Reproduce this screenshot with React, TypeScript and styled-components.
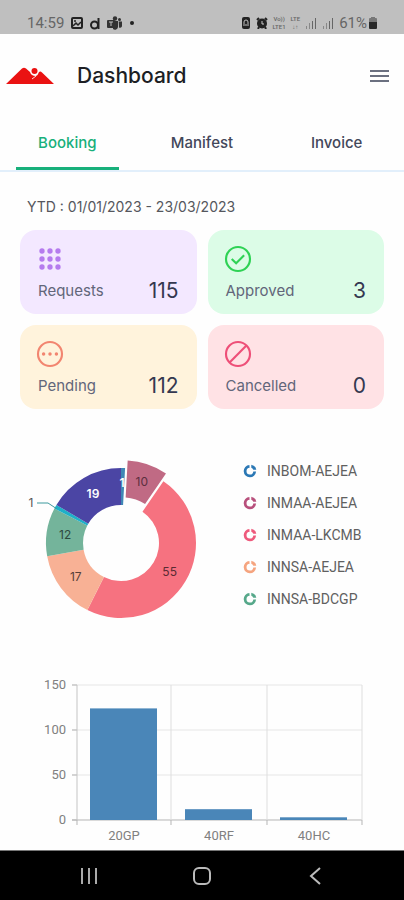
import React, { useState } from "react";
import styled, { createGlobalStyle } from "styled-components";

const GlobalStyle = createGlobalStyle`
  *, *::before, *::after { box-sizing: border-box; }
  body { margin: 0; background: #fefefe; font-family: Inter, "Liberation Sans", sans-serif; color: #1f2430; }
  button { font: inherit; border: 0; background: none; padding: 0; cursor: pointer; }
  svg { display: block; }
`;

const Screen = styled.div`
  display: flex;
  flex-direction: column;
  min-height: 100vh;
`;

const StatusBar = styled.div`
  display: flex;
  align-items: center;
  justify-content: space-between;
  height: 34px;
  padding: 12px 27px 0;
  background: #bfbfbf;
  color: #666;
  font: 15px Roboto, sans-serif;
`;

const StatusGroup = styled.div<{ $gap: number }>`
  display: flex;
  align-items: center;
  gap: ${(p) => p.$gap}px;
`;

const NetworkLabel = styled.span`
  display: grid;
  font-size: 6px;
  line-height: 8px;
  text-align: center;
  font-weight: 500;
`;

const Battery = styled.span`
  display: flex;
  align-items: center;
  gap: 2px;
`;

const Header = styled.header`
  display: flex;
  align-items: center;
  height: 84px;
  padding: 0 14px 0 5px;
`;

const Title = styled.h1`
  flex: 1;
  margin: 0 0 0 22px;
  font-size: 21px;
  line-height: 28px;
  font-weight: 500;
  color: #1d1f24;
`;

const Tabs = styled.nav`
  display: grid;
  grid-template-columns: repeat(3, 1fr);
  height: 54px;
  border-bottom: 2px solid #e2effb;
`;

const Tab = styled.button<{ $active: boolean }>`
  && {
    margin: 0 16px;
    border-bottom: 3px solid ${(p) => (p.$active ? "#18b07b" : "transparent")};
    color: ${(p) => (p.$active ? "#18b07b" : "#43475a")};
    font-size: 15px;
    font-weight: 500;
  }
`;

const Main = styled.main`
  padding: 24px 20px 0;
`;

const Period = styled.p`
  margin: 0 0 12px;
  padding-left: 7px;
  font-size: 14px;
  line-height: 22px;
  color: #55575d;
`;

const Cards = styled.div`
  display: grid;
  grid-template-columns: 1fr 1fr;
  gap: 11px;
`;

const Card = styled.section<{ $bg: string }>`
  height: 84px;
  padding: 13px 18px 0 14px;
  border-radius: 16px;
  background: ${(p) => p.$bg};
`;

const CardRow = styled.div`
  display: flex;
  align-items: center;
  justify-content: space-between;
  padding-left: 4px;
  line-height: 32px;
`;

const CardLabel = styled.span`
  font-size: 15px;
  color: #62667a;
`;

const CardValue = styled.span`
  font-size: 21px;
  color: #343850;
`;

const Breakdown = styled.section`
  display: flex;
  align-items: flex-start;
  justify-content: space-between;
  margin-top: 41px;
`;

const Legend = styled.ul`
  flex: 1;
  margin: 5px 0 0 43px;
  padding: 0;
  list-style: none;
`;

const LegendItem = styled.li`
  display: flex;
  align-items: center;
  gap: 10px;
  height: 32px;
  font: 14px Roboto, sans-serif;
  color: #606060;
`;

const BarSection = styled.section`
  margin-top: 52px;
`;

const BottomBar = styled.nav`
  display: grid;
  grid-template-columns: repeat(3, 1fr);
  align-items: center;
  height: 50px;
  margin-top: auto;
  padding: 0 32px;
  border-top: 1px solid #777;
  background: #000;
`;

const NavButton = styled.button`
  display: flex;
  justify-content: center;
`;

const SlotIcon = styled.svg`
  flex: none;
`;

const CX = 101;
const CY = 93;
const R_OUT = 75;
const R_IN = 38;
const TOTAL = 115;

type Slice = { value: number; color: string; label: string; shift?: number };

const slices: Slice[] = [
  { value: 1, color: "#3f87b5", label: "" },
  { value: 10, color: "#c06a84", label: "#5b2f3f", shift: 8 },
  { value: 55, color: "#f67280", label: "#5a2b33" },
  { value: 17, color: "#f8b195", label: "#574038" },
  { value: 12, color: "#74b49b", label: "#2d4a40" },
  { value: 1, color: "#1fb0c8", label: "" },
  { value: 19, color: "#4b45a4", label: "#ffffff" },
];

const point = (radius: number, angle: number) => [
  CX + radius * Math.sin(angle),
  CY - radius * Math.cos(angle),
];

function ringPath(start: number, end: number) {
  const large = end - start > Math.PI ? 1 : 0;
  const [a, b, c, d] = [point(R_OUT, start), point(R_OUT, end), point(R_IN, end), point(R_IN, start)];
  return `M${a} A${R_OUT} ${R_OUT} 0 ${large} 1 ${b} L${c} A${R_IN} ${R_IN} 0 ${large} 0 ${d}Z`;
}

function Donut() {
  let before = 0;
  return (
    <SlotIcon width="180" height="174" viewBox="0 0 180 174" role="img" aria-label="Bookings by route">
      {slices.map((slice, index) => {
        const start = (before / TOTAL) * Math.PI * 2;
        before += slice.value;
        const end = (before / TOTAL) * Math.PI * 2;
        const mid = (start + end) / 2;
        const shift = slice.shift ?? 0;
        const [x, y] = point((R_OUT + R_IN) / 2, mid);
        return (
          <g key={index} transform={`translate(${shift * Math.sin(mid)} ${-shift * Math.cos(mid)})`}>
            <path d={ringPath(start, end)} fill={slice.color} />
            {slice.label && (
              <text
                x={x}
                y={y + 4}
                fontSize="12"
                fontWeight={slice.value === 19 ? 600 : 400}
                textAnchor="middle"
                fill={slice.label}
              >
                {slice.value}
              </text>
            )}
          </g>
        );
      })}
      <text x="102" y="37" fontSize="12" fontWeight="600" textAnchor="middle" fill="#fff">1</text>
      <path d="M17 53h11l9 6" fill="none" stroke="#3d9a9e" strokeWidth="1" />
      <text x="11" y="57" fontSize="12" textAnchor="middle" fill="#555">1</text>
    </SlotIcon>
  );
}

const routes = [
  ["INBOM-AEJEA", "#2b78b5"],
  ["INMAA-AEJEA", "#b8507c"],
  ["INMAA-LKCMB", "#ee5a7c"],
  ["INNSA-AEJEA", "#f5a47f"],
  ["INNSA-BDCGP", "#56a88a"],
];

function RingMark({ color }: { color: string }) {
  return (
    <SlotIcon width="14" height="14" viewBox="0 0 14 14" fill="none" aria-hidden="true">
      <path d="M11.700 7.500A4.800 4.800 0 1 1 6.500 2.300" stroke={color} strokeWidth="2.800" />
      <path d="M8.300.7a6.400 6.400 0 0 1 5 5L10.300 5.800A3.500 3.500 0 0 0 8.300 3.800Z" fill={color} />
    </SlotIcon>
  );
}

const sizes = [
  { name: "20GP", value: 124 },
  { name: "40RF", value: 12 },
  { name: "40HC", value: 3 },
];

function BarChart() {
  const yOf = (v: number) => 144 - (v * 135) / 150;
  return (
    <svg width="100%" viewBox="0 0 364 168" fontFamily="Roboto, sans-serif" fontSize="13" fill="#808080" role="img" aria-label="Bookings by container size">
      {[0, 50, 100, 150].map((v) => (
        <g key={v}>
          <path d={`M52 ${yOf(v)}H342`} stroke={v ? "#e6e6e6" : "#b5b5b5"} />
          <path d={`M52 ${yOf(v)}h5`} stroke="#b5b5b5" />
          <text x="46" y={yOf(v) + 4} textAnchor="end">{v}</text>
        </g>
      ))}
      {[57, 151, 247, 342].map((x) => (
        <g key={x}>
          <path d={`M${x} 9V144`} stroke={x === 57 ? "#c4c4c4" : "#dedede"} />
          <path d={`M${x} 144v5`} stroke="#b5b5b5" />
        </g>
      ))}
      {sizes.map((size, i) => (
        <g key={size.name}>
          <rect x={70 + i * 95} y={yOf(size.value)} width="67" height={144 - yOf(size.value)} fill="#4a86b8" />
          <text x={104 + i * 95} y="164" textAnchor="middle">{size.name}</text>
        </g>
      ))}
    </svg>
  );
}

function Signal() {
  return (
    <svg width="12" height="12" viewBox="0 0 12 12" aria-hidden="true">
      <path d="M1 9h1v3H1zM4 6h1v6H4z" fill="#888" />
      <path d="M7 4h1v8H7zM10 1h1v11h-1z" fill="#666" />
    </svg>
  );
}

const stats = [
  {
    label: "Requests", value: 115, bg: "#f3e8ff", color: "#b57bee",
    icon: [6, 12, 18].flatMap((y) => [6, 12, 18].map((x) => <circle key={`${x}-${y}`} cx={x} cy={y} r="2" fill="currentColor" stroke="none" />)),
  },
  {
    label: "Approved", value: 3, bg: "#dcfce7", color: "#2fd255",
    icon: <><circle cx="12" cy="12" r="9" /><path d="m7.300 12 3.300 3.200 6-6" /></>,
  },
  {
    label: "Pending", value: 112, bg: "#fff3dc", color: "#f28570",
    icon: <><circle cx="12" cy="12" r="9" /><path d="M7.200 12h.010M12 12h.010M16.800 12h.010" strokeWidth="2.600" strokeLinecap="round" /></>,
  },
  {
    label: "Cancelled", value: 0, bg: "#ffe2e5", color: "#ee4f78",
    icon: <><circle cx="12" cy="12" r="9" /><path d="M5.700 18.300 18.300 5.700" /></>,
  },
];

const tabNames = ["Booking", "Manifest", "Invoice"];

export default function App() {
  const [active, setActive] = useState("Booking");
  return (
    <Screen>
      <GlobalStyle />
      <StatusBar>
        <StatusGroup $gap={7}>
          <span>14:59</span>
          <svg width="12" height="12" viewBox="0 0 12 12" fill="none" stroke="#222" aria-hidden="true">
            <rect x="1" y="1" width="10" height="10" rx="1" strokeWidth="2" />
            <path d="m2 9 3-3 2 2 3-3M4 3v2" strokeWidth="1.500" />
          </svg>
          <svg width="10" height="13" viewBox="0 0 10 13" fill="none" stroke="#222" strokeWidth="2" aria-hidden="true">
            <circle cx="4.500" cy="8" r="3.500" /><path d="M8.500 1v11" />
          </svg>
          <svg width="15" height="14" viewBox="0 0 15 14" fill="#333" aria-hidden="true">
            <circle cx="8" cy="2.500" r="2.200" /><circle cx="12.500" cy="3.500" r="1.500" />
            <path d="M6 5h5v6a3 3 0 0 1-5 2zM11.700 5.500H15V10a2 2 0 0 1-3 1.500z" />
            <rect y="4" width="8" height="8" rx="1" /><path d="M2 6h4M4 6v4" stroke="#bfbfbf" />
          </svg>
          <svg width="6" height="4" viewBox="0 0 6 4" aria-hidden="true"><circle cx="3" cy="2" r="2" fill="#222" /></svg>
        </StatusGroup>
        <StatusGroup $gap={5}>
          <svg width="10" height="12" viewBox="0 0 10 12" aria-hidden="true">
            <rect x="1" width="8" height="12" rx="2" fill="#222" /><path d="M3 7V5a2 2 0 0 1 4 0v2M2 8h6" stroke="#bfbfbf" fill="none" />
          </svg>
          <svg width="12" height="12" viewBox="0 0 12 12" aria-hidden="true">
            <circle cx="6" cy="6.500" r="5" fill="#222" /><path d="M1 3 3 1m6 0 2 2M3 10l-1 2m7-2 1 2" stroke="#222" strokeWidth="2" /><path d="M6 4v3h2" stroke="#ccc" fill="none" />
          </svg>
          <NetworkLabel><span>Vo))</span><span>LTE1</span></NetworkLabel>
          <NetworkLabel><span>LTE</span><span>↓↑</span></NetworkLabel>
          <Signal />
          <Signal />
          <Battery>
            61%
            <svg width="8" height="12" viewBox="0 0 8 12" aria-hidden="true">
              <path d="M2 0h4v1h1q1 0 1 1v3H0V2q0-1 1-1h1z" fill="#777" /><path d="M0 5h8v6q0 1-1 1H1q-1 0-1-1z" fill="#292929" />
            </svg>
          </Battery>
        </StatusGroup>
      </StatusBar>
      <Header>
        <svg width="50" height="20" viewBox="0 0 50 20" role="img" aria-label="Company logo">
          <path d="M1 18 17 2.500Q19 1 21 2.500L25 6q1 4 6 4 2-1 3-4 1.500-1 3 .500L49 18Z" fill="#ea1212" />
          <path d="m31 10-4 3" stroke="#fbdcdc" strokeWidth="1" />
          <circle cx="29.500" cy="5" r="3" fill="#ea1212" />
        </svg>
        <Title>Dashboard</Title>
        <button aria-label="Menu">
          <svg width="20" height="16" viewBox="0 0 20 16" aria-hidden="true">
            <path d="M0 3h19M0 8h19M0 13h19" stroke="#6b7080" strokeWidth="2" />
          </svg>
        </button>
      </Header>
      <Tabs>
        {tabNames.map((name) => (
          <Tab key={name} $active={name === active} onClick={() => setActive(name)}>{name}</Tab>
        ))}
      </Tabs>
      <Main>
        <Period>YTD : 01/01/2023 - 23/03/2023</Period>
        <Cards>
          {stats.map((stat) => (
            <Card key={stat.label} $bg={stat.bg}>
              <svg width="32" height="32" viewBox="0 0 24 24" fill="none" stroke="currentColor" strokeWidth="1.600" color={stat.color} aria-hidden="true">
                {stat.icon}
              </svg>
              <CardRow>
                <CardLabel>{stat.label}</CardLabel>
                <CardValue>{stat.value}</CardValue>
              </CardRow>
            </Card>
          ))}
        </Cards>
        <Breakdown>
          <Donut />
          <Legend>
            {routes.map(([name, color]) => (
              <LegendItem key={name}><RingMark color={color} />{name}</LegendItem>
            ))}
          </Legend>
        </Breakdown>
        <BarSection>
          <BarChart />
        </BarSection>
      </Main>
      <BottomBar>
        <NavButton aria-label="Recent apps">
          <svg width="18" height="18" viewBox="0 0 18 18" aria-hidden="true"><path d="M2 1v16M9 1v16M16 1v16" stroke="#aaa" strokeWidth="2" /></svg>
        </NavButton>
        <NavButton aria-label="Home">
          <svg width="18" height="18" viewBox="0 0 18 18" fill="none" aria-hidden="true"><rect x="1" y="1" width="16" height="16" rx="5" stroke="#bbb" strokeWidth="2" /></svg>
        </NavButton>
        <NavButton aria-label="Back">
          <svg width="12" height="18" viewBox="0 0 12 18" fill="none" aria-hidden="true"><path d="M11 1 2 9l9 8" stroke="#bbb" strokeWidth="2" /></svg>
        </NavButton>
      </BottomBar>
    </Screen>
  );
}
